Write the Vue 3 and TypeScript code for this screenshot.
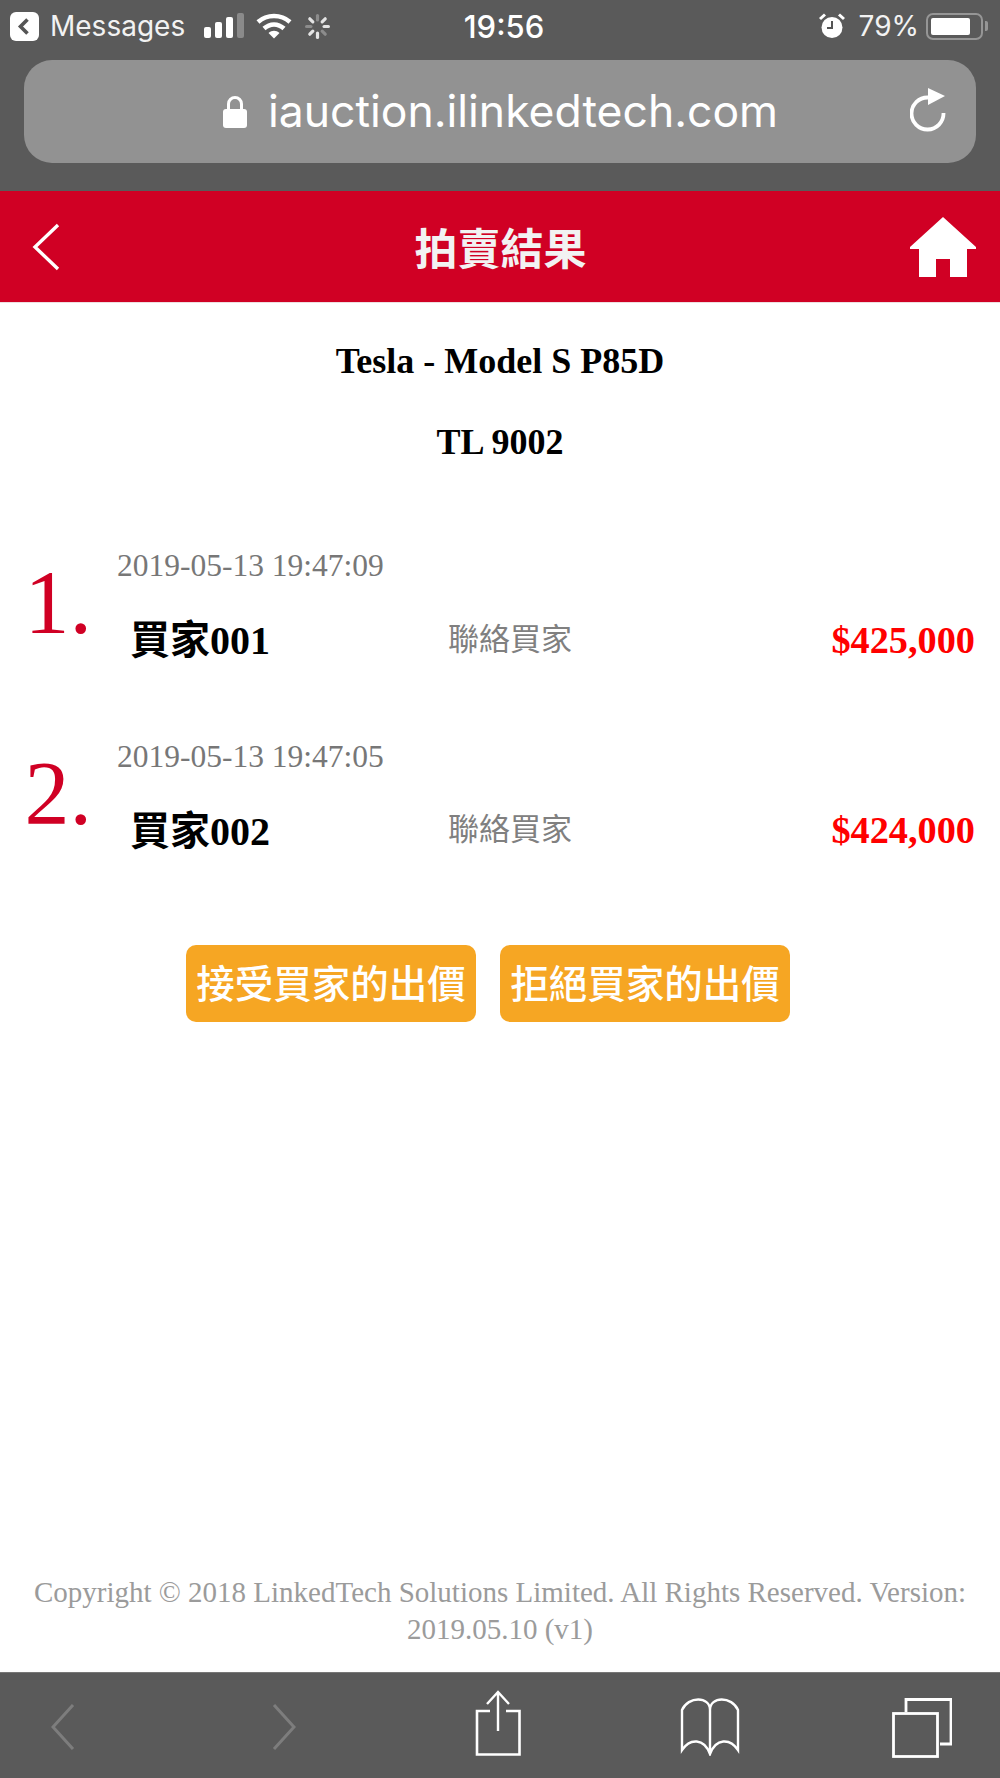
<script setup lang="ts">
interface BidModel {
  rank: number;
  time: string;
  buyer: string;
  price: string;
}

const bids: BidModel[] = [
  { rank: 1, time: "2019-05-13 19:47:09", buyer: "買家001", price: "$425,000" },
  { rank: 2, time: "2019-05-13 19:47:05", buyer: "買家002", price: "$424,000" },
];

// spinner spokes, brightest at the top right
const spokes = [0, 45, 90, 135, 180, 225, 270, 315];
</script>

<template>
  <div class="page">
    <div class="chrome">
      <div class="status">
        <div class="status-left">
          <span class="back-tile">
            <svg width="29" height="29" viewBox="0 0 29 29">
              <path d="M17.5 7.5 L10.5 14.5 L17.5 21.5" fill="none" stroke="#555" stroke-width="3.6" />
            </svg>
          </span>
          <span class="status-app">Messages</span>
          <svg class="signal" width="40" height="26" viewBox="0 0 40 26">
            <rect x="0" y="14" width="7" height="11" rx="2" fill="#fff" />
            <rect x="11" y="9" width="7" height="16" rx="2" fill="#fff" />
            <rect x="22" y="4" width="7" height="21" rx="2" fill="#fff" />
            <rect x="33" y="0" width="7" height="25" rx="2" fill="#8a8a8a" />
          </svg>
          <svg class="wifi" width="36" height="26" viewBox="0 0 36 26">
            <path d="M2 9 C11 1 25 1 34 9" fill="none" stroke="#fff" stroke-width="4.500" />
            <path d="M8 15.500 C14 10 22 10 28 15.500" fill="none" stroke="#fff" stroke-width="4.500" />
            <path d="M12.500 20 C16 17 20 17 23.500 20 L18 25.500 Z" fill="#fff" />
          </svg>
          <svg class="spinner" width="25" height="25" viewBox="-12.5 -12.5 25 25">
            <rect
              v-for="(a, i) in spokes"
              :key="a"
              x="-1.6"
              y="-12.500"
              width="3.2"
              height="7.500"
              rx="1.6"
              :fill="i % 3 === 0 ? '#8c8c8c' : '#e4e4e4'"
              :transform="`rotate(${a})`"
            />
          </svg>
        </div>
        <span class="status-time">19:56</span>
        <div class="status-right">
          <svg width="26" height="26" viewBox="0 0 26 26">
            <circle cx="13" cy="14.5" r="10.5" fill="#fff" />
            <path d="M13 8 V15 H8" fill="none" stroke="#555" stroke-width="2" />
            <path d="M1 6 L6 1.5 M25 6 L20 1.5" stroke="#fff" stroke-width="3" />
          </svg>
          <span class="status-pct">79%</span>
          <span class="battery"><span class="battery-fill"></span></span>
          <span class="battery-nub"></span>
        </div>
      </div>
      <div class="url-bar">
        <div class="url-main">
          <svg width="26" height="34" viewBox="0 0 26 34">
            <path d="M6.5 15 V9 a6.5 6.5 0 0 1 13 0 V15" fill="none" stroke="#fff" stroke-width="3" />
            <rect x="1" y="14" width="24" height="19" rx="3" fill="#fff" />
          </svg>
          <span class="url-text">iauction.ilinkedtech.com</span>
        </div>
        <svg class="reload" width="38" height="44" viewBox="0 0 38 44">
          <path d="M33.5 25 A16 16 0 1 1 18 9.5" fill="none" stroke="#fff" stroke-width="3.8" />
          <path d="M18 0 L35 8 L18 17 Z" fill="#fff" />
        </svg>
      </div>
    </div>

    <header class="title-bar">
      <svg width="28" height="48" viewBox="0 0 28 48">
        <path d="M26 2 L3 24 L26 46" fill="none" stroke="#fff" stroke-width="3.4" />
      </svg>
      <h1 class="title">拍賣結果</h1>
      <svg class="home" width="68" height="62" viewBox="0 0 68 62">
        <path d="M34 1 L67 31 V33 H58 V61 H41 V43 H27 V61 H10 V33 H1 V31 Z" fill="#fff" />
      </svg>
    </header>

    <main class="content">
      <p class="car">Tesla - Model S P85D</p>
      <p class="car plate">TL 9002</p>

      <ul class="bids">
        <li v-for="bid in bids" :key="bid.rank" class="bid">
          <div class="rank">{{ bid.rank }}.</div>
          <div class="bid-body">
            <div class="bid-time">{{ bid.time }}</div>
            <div class="bid-row">
              <span class="buyer">{{ bid.buyer }}</span>
              <span class="contact">聯絡買家</span>
              <span class="price">{{ bid.price }}</span>
            </div>
          </div>
        </li>
      </ul>

      <div class="actions">
        <button class="action" type="button">接受買家的出價</button>
        <button class="action" type="button">拒絕買家的出價</button>
      </div>

      <footer class="copyright">
        Copyright © 2018 LinkedTech Solutions Limited. All Rights Reserved. Version: 2019.05.10 (v1)
      </footer>
    </main>

    <nav class="toolbar">
      <svg width="24" height="46" viewBox="0 0 24 46">
        <path d="M22 1 L2 23 L22 45" fill="none" stroke="#7d7d7d" stroke-width="3" />
      </svg>
      <svg width="24" height="46" viewBox="0 0 24 46">
        <path d="M2 1 L22 23 L2 45" fill="none" stroke="#7d7d7d" stroke-width="3" />
      </svg>
      <svg width="46" height="66" viewBox="0 0 46 66">
        <path d="M15 21 H2 V64.500 H44.500 V21 H31" fill="none" stroke="#fff" stroke-width="2.600" />
        <path d="M23 2 V41 M12 14 L23 2 L34 14" fill="none" stroke="#fff" stroke-width="2.400" />
      </svg>
      <svg width="60" height="58" viewBox="0 0 60 58">
        <path
          d="M30 12 C30 -2 8 -2 2 12 V52 C10 40 24 40 30 56 C36 40 50 40 58 52 V12 C52 -2 30 -2 30 12 V56"
          fill="none"
          stroke="#fff"
          stroke-width="2.400"
        />
      </svg>
      <svg width="60" height="60" viewBox="0 0 60 60">
        <path d="M14 14 V1.500 H59 V46 H48" fill="none" stroke="#fff" stroke-width="2.800" />
        <rect x="1.500" y="15.500" width="44" height="43" fill="none" stroke="#fff" stroke-width="2.800" />
      </svg>
    </nav>
  </div>
</template>

<style scoped>
.page {
  width: 1000px;
  height: 1778px;
  display: flex;
  flex-direction: column;
  background: #fff;
  font-family: "Liberation Serif", "Noto Sans CJK TC", serif;
}

.chrome {
  height: 191px;
  background: #5a5a5a;
  padding: 0 24px;
  box-sizing: border-box;
}

.status {
  height: 52px;
  margin: 0 -14px;
  padding-right: 2px;
  display: grid;
  grid-template-columns: 1fr auto 1fr;
  align-items: center;
  color: #fff;
  font-family: Inter, "Noto Sans", sans-serif;
}

.status-left,
.status-right {
  display: flex;
  align-items: center;
}

.status-right {
  justify-content: flex-end;
}

.back-tile {
  width: 29px;
  height: 29px;
  border-radius: 6px;
  background: #fff;
  display: block;
}

.back-tile svg {
  display: block;
}

.status-app {
  margin-left: 11px;
  font-size: 28px;
  color: #f2f2f2;
}

.signal {
  margin-left: 19px;
}

.wifi {
  margin-left: 12px;
}

.spinner {
  margin-left: 13px;
}

.status-time {
  font-size: 31px;
  font-weight: 500;
  margin-left: 10px;
}

.status-pct {
  margin-left: 14px;
  font-size: 28px;
  color: #f2f2f2;
}

.battery {
  margin-left: 7px;
  width: 57px;
  height: 27px;
  box-sizing: border-box;
  border: 2px solid #969696;
  border-radius: 7px;
  padding: 3px;
  display: block;
}

.battery-fill {
  display: block;
  width: 39px;
  height: 100%;
  background: #fff;
  border-radius: 2px;
}

.battery-nub {
  margin-left: 2px;
  width: 3px;
  height: 10px;
  background: #969696;
  border-radius: 0 2px 2px 0;
}

.url-bar {
  height: 103px;
  margin-top: 8px;
  border-radius: 28px;
  background: #929292;
  display: flex;
  align-items: center;
  position: relative;
  justify-content: center;
}

.url-main {
  display: flex;
  align-items: center;
  gap: 20px;
  transform: translateX(0);
}

.url-text {
  color: #fff;
  font-family: Inter, "Noto Sans", sans-serif;
  font-size: 44.5px;
  line-height: 1;
}

.reload {
  position: absolute;
  right: 28px;
  top: 28px;
}

.title-bar {
  height: 112px;
  background: #d00024;
  border-bottom: 1px solid #eddfe0;
  box-sizing: border-box;
  padding: 0 23px 0 32px;
  display: grid;
  grid-template-columns: 1fr auto 1fr;
  align-items: center;
}

.home {
  justify-self: end;
}

.title {
  margin: 0 8px 0 0;
  color: #f2f2f2;
  font-family: "Noto Sans CJK TC", sans-serif;
  font-size: 43px;
  font-weight: 700;
  line-height: 1;
}

.content {
  flex: 1;
  display: flex;
  flex-direction: column;
  min-height: 0;
}

.car {
  margin: 33px 0 0;
  height: 50px;
  line-height: 50px;
  text-align: center;
  font-size: 36px;
  font-weight: 700;
  color: #000;
}

.plate {
  margin-top: 31px;
}

.bids {
  list-style: none;
  margin: 0;
  padding: 79px 0 0;
}

.bid {
  height: 190.5px;
  display: flex;
  color: #000;
}

.rank {
  width: 117px;
  box-sizing: border-box;
  padding-right: 25px;
  text-align: right;
  font-size: 90px;
  line-height: 100px;
  color: #d00024;
  margin-top: 7px;
}

.bid-body {
  flex: 1;
  padding-right: 25px;
}

.bid-time {
  font-size: 31.5px;
  line-height: 40px;
  color: #777;
}

.bid-row {
  margin-top: 25px;
  display: grid;
  grid-template-columns: 331px 1fr auto;
  align-items: center;
}

.buyer {
  padding-left: 13px;
  font-size: 40px;
  font-weight: 700;
  line-height: 60px;
}

.contact {
  font-family: "Noto Sans CJK TC", sans-serif;
  font-size: 31px;
  color: #808080;
  margin-top: -10px;
}

.price {
  font-size: 38.3px;
  font-weight: 700;
  color: #f00;
  margin-top: -3px;
}

.actions {
  margin-top: 18px;
  padding-right: 24px;
  display: flex;
  justify-content: center;
  gap: 24px;
}

.action {
  width: 290px;
  height: 77px;
  padding: 0 0 6px;
  border: 0;
  border-radius: 10px;
  background: #f6a623;
  color: #fff;
  font-family: "Noto Sans CJK TC", sans-serif;
  font-size: 38.5px;
  font-weight: 500;
  white-space: nowrap;
}

.copyright {
  margin-top: auto;
  padding: 0 30px 24px;
  text-align: center;
  font-size: 29px;
  line-height: 37px;
  color: #9b9b9b;
}

.toolbar {
  height: 106px;
  background: #5a5a5a;
  border-top: 1px solid #777;
  box-sizing: border-box;
  padding: 17px 0 0 51px;
  display: grid;
  grid-template-columns: 221px 203px 205px 212px auto;
  align-items: start;
  justify-items: start;
}

.toolbar svg:nth-child(1),
.toolbar svg:nth-child(2) {
  margin-top: 14px;
}

.toolbar svg:nth-child(4),
.toolbar svg:nth-child(5) {
  margin-top: 8px;
}
</style>

<style>
html,
body {
  margin: 0;
  background: #fff;
}
</style>
